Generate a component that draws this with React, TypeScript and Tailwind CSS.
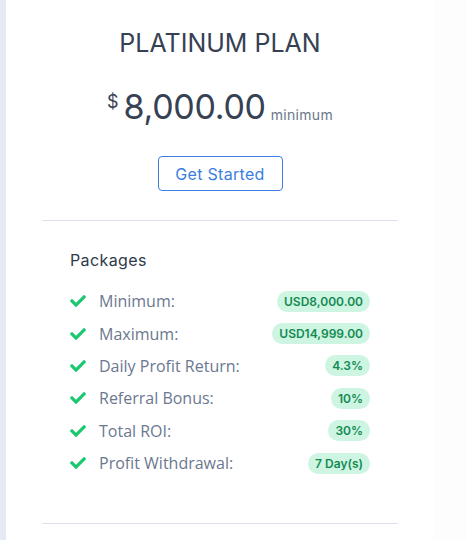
import { FaCheck } from "react-icons/fa";

const rows = [
  { label: "Minimum:", value: "USD8,000.00" },
  { label: "Maximum:", value: "USD14,999.00" },
  { label: "Daily Profit Return:", value: "4.3%" },
  { label: "Referral Bonus:", value: "10%" },
  { label: "Total ROI:", value: "30%" },
  { label: "Profit Withdrawal:", value: "7 Day(s)" },
];

const heading = { fontFamily: "Inter, 'Noto Sans', sans-serif" };

export default function App() {
  return (
    <div className="flex min-h-[540px] bg-[#fdfdfd]">
      <div className="w-[6px] shrink-0 bg-[#e6eaf3]" />
      <div className="w-[428px] bg-white px-9">
        <div className="flex flex-col items-center pt-[28px]">
          <h2 className="text-[25px] font-normal leading-[30px] text-[#364153]" style={heading}>
            PLATINUM PLAN
          </h2>
          <div className="mt-[29px] flex items-end text-[#364153]" style={heading}>
            <span className="mb-[16px] mr-[5px] text-[18px] leading-none">$</span>
            <span className="text-[34px] font-normal leading-[40px] tracking-[-0.3px]">8,000.00</span>
            <span className="mb-[5px] ml-[5px] text-[14px] leading-none tracking-[0.3px] text-[#6b7789]">minimum</span>
          </div>
          <button
            className="mt-[29px] h-[35px] w-[125px] rounded-[4px] border border-[#3b7ee0] text-[16px] font-normal tracking-[0.3px] text-[#3b7ee0]"
            style={heading}
          >
            Get Started
          </button>
        </div>
        <div className="mt-[29px] border-t border-[#dce2ec] px-7 pb-[44px] pt-[28px]">
          <h3 className="text-[16px] font-normal leading-[22px] tracking-[0.4px] text-[#2f3a4b]" style={heading}>
            Packages
          </h3>
          <ul className="mt-[14px] flex flex-col">
            {rows.map((r) => (
              <li key={r.label} className="flex h-[32.4px] items-center">
                <FaCheck className="h-[16px] w-[16px] text-[#1ac96f]" />
                <span
                  className="ml-[13px] flex-1 text-[16px] text-[#6b7890]"
                  style={{ fontFamily: "'Open Sans', sans-serif" }}
                >
                  {r.label}
                </span>
                <span
                  className="rounded-full bg-[#cdf5e2] px-[7px] py-[3px] text-[12px] font-semibold leading-[15px] text-[#148a52]"
                  style={heading}
                >
                  {r.value}
                </span>
              </li>
            ))}
          </ul>
        </div>
        <div className="border-t border-[#dce2ec]" />
      </div>
    </div>
  );
}
